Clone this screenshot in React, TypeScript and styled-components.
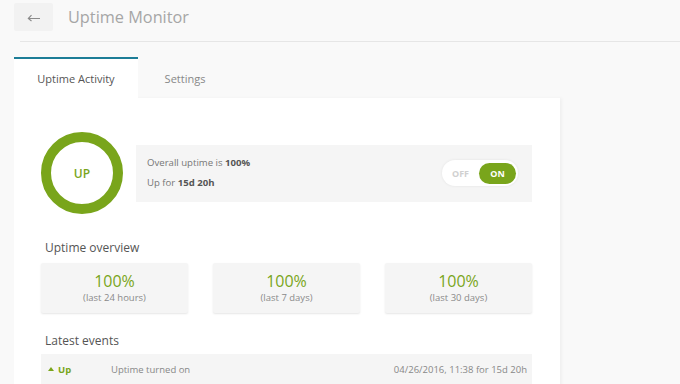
import React from "react";
import styled, { createGlobalStyle } from "styled-components";

const GREEN = "#79a51b";
const TEAL = "#1d7d97";

const GlobalStyle = createGlobalStyle`
  html, body {
    margin: 0;
    padding: 0;
    background: #f9f9f9;
    font-family: "Open Sans", "Liberation Sans", sans-serif;
    color: #666;
  }
  * {
    box-sizing: border-box;
  }
`;

const S = {
  Page: styled.div`
    width: 680px;
    height: 384px;
    overflow: hidden;
  `,
  Header: styled.div`
    display: flex;
    align-items: center;
    gap: 15px;
    height: 41px;
    padding: 3px 0 10px 14px;
  `,
  BackButton: styled.button`
    width: 39px;
    height: 28px;
    border: none;
    border-radius: 2px;
    background: #f2f2f2;
    display: flex;
    align-items: center;
    justify-content: center;
    padding: 0;
    cursor: pointer;
  `,
  Title: styled.h1`
    margin: 0;
    font-size: 16.3px;
    font-weight: 400;
    color: #a6a6a6;
  `,
  Divider: styled.div`
    height: 1px;
    margin-left: 20px;
    background: #e6e6e6;
  `,
  Tabs: styled.div`
    display: flex;
    margin: 15px 0 0 14px;
  `,
  Tab: styled.div<{ $active?: boolean; $width: number }>`
    width: ${(p) => p.$width}px;
    height: 41px;
    display: flex;
    align-items: center;
    justify-content: center;
    font-size: 11px;
    color: ${(p) => (p.$active ? "#555" : "#888")};
    background: ${(p) => (p.$active ? "#fff" : "transparent")};
    border-top: 2px solid ${(p) => (p.$active ? TEAL : "transparent")};
  `,
  Card: styled.div`
    width: 546px;
    margin-left: 14px;
    background: #fff;
    padding: 34px 28px 0 27px;
    min-height: 300px;
    box-shadow: 2px 0 3px rgba(0, 0, 0, 0.04);
  `,
  StatusRow: styled.div`
    display: flex;
    align-items: center;
    gap: 13px;
  `,
  Ring: styled.div`
    width: 82px;
    height: 82px;
    border-radius: 50%;
    border: 10px solid ${GREEN};
    display: flex;
    align-items: center;
    justify-content: center;
    color: ${GREEN};
    font-size: 12px;
    font-weight: 600;
    flex-shrink: 0;
  `,
  InfoBox: styled.div`
    flex: 1;
    height: 57px;
    background: #f5f5f5;
    display: flex;
    align-items: center;
    justify-content: space-between;
    padding: 0 14px 0 11px;
  `,
  InfoText: styled.div`
    font-size: 9.6px;
    color: #777;
    line-height: 20px;
    b {
      color: #555;
      font-weight: 700;
    }
  `,
  Toggle: styled.div`
    width: 76px;
    height: 26px;
    border-radius: 13px;
    background: #fff;
    box-shadow: 0 0 3px rgba(0, 0, 0, 0.08);
    display: flex;
    align-items: center;
    padding: 0 2px 0 0;
    font-size: 9px;
    font-weight: 700;
  `,
  ToggleOff: styled.span`
    flex: 1;
    text-align: center;
    color: #d0d0d0;
  `,
  ToggleOn: styled.span`
    width: 37px;
    height: 21px;
    border-radius: 11px;
    background: ${GREEN};
    color: #fff;
    display: flex;
    align-items: center;
    justify-content: center;
  `,
  SectionTitle: styled.h2<{ $top: number; $bottom: number }>`
    margin: ${(p) => p.$top}px 0 ${(p) => p.$bottom}px 4px;
    font-size: 12px;
    font-weight: 400;
    color: #555;
    line-height: 16px;
  `,
  StatGrid: styled.div`
    display: grid;
    grid-template-columns: repeat(3, 147px);
    justify-content: space-between;
  `,
  StatCard: styled.div`
    height: 50px;
    background: #f5f5f5;
    border-radius: 2px;
    box-shadow: 0 1px 2px rgba(0, 0, 0, 0.1);
    display: flex;
    flex-direction: column;
    align-items: center;
    justify-content: center;
  `,
  StatValue: styled.div`
    font-size: 16px;
    color: ${GREEN};
    line-height: 20px;
  `,
  StatLabel: styled.div`
    font-size: 9.5px;
    color: #8a8a8a;
    line-height: 14px;
  `,
  EventRow: styled.div`
    height: 30px;
    background: #f5f5f5;
    display: flex;
    align-items: center;
    padding: 0 5px 0 7px;
    font-size: 9.5px;
    color: #888;
  `,
  EventStatus: styled.span`
    width: 63px;
    color: ${GREEN};
    font-weight: 700;
    display: flex;
    align-items: center;
    gap: 4px;
  `,
  EventText: styled.span`
    flex: 1;
  `,
};

const stats = [
  { value: "100%", label: "(last 24 hours)" },
  { value: "100%", label: "(last 7 days)" },
  { value: "100%", label: "(last 30 days)" },
];

const App = () => {
  return (
    <S.Page>
      <GlobalStyle />
      <S.Header>
        <S.BackButton>
          <svg width="14" height="10" viewBox="0 0 14 10" fill="none" stroke="#8a8a8a" strokeWidth="1.1">
            <path d="M13 6.5H1.5M4.5 3.2L1.3 6.5L4.5 9" />
          </svg>
        </S.BackButton>
        <S.Title>Uptime Monitor</S.Title>
      </S.Header>
      <S.Divider />
      <S.Tabs>
        <S.Tab $active $width={124}>Uptime Activity</S.Tab>
        <S.Tab $width={94}>Settings</S.Tab>
      </S.Tabs>
      <S.Card>
        <S.StatusRow>
          <S.Ring>UP</S.Ring>
          <S.InfoBox>
            <S.InfoText>
              <div>
                Overall uptime is <b>100%</b>
              </div>
              <div>
                Up for <b>15d 20h</b>
              </div>
            </S.InfoText>
            <S.Toggle>
              <S.ToggleOff>OFF</S.ToggleOff>
              <S.ToggleOn>ON</S.ToggleOn>
            </S.Toggle>
          </S.InfoBox>
        </S.StatusRow>
        <S.SectionTitle $top={26} $bottom={7}>Uptime overview</S.SectionTitle>
        <S.StatGrid>
          {stats.map((s) => (
            <S.StatCard key={s.label}>
              <S.StatValue>{s.value}</S.StatValue>
              <S.StatLabel>{s.label}</S.StatLabel>
            </S.StatCard>
          ))}
        </S.StatGrid>
        <S.SectionTitle $top={20} $bottom={5}>Latest events</S.SectionTitle>
        <S.EventRow>
          <S.EventStatus>
            <svg width="6" height="4" viewBox="0 0 6 4">
              <path d="M0 4L3 0L6 4Z" fill={GREEN} />
            </svg>
            Up
          </S.EventStatus>
          <S.EventText>Uptime turned on</S.EventText>
          <span>04/26/2016, 11:38 for 15d 20h</span>
        </S.EventRow>
      </S.Card>
    </S.Page>
  );
};

export default App;
